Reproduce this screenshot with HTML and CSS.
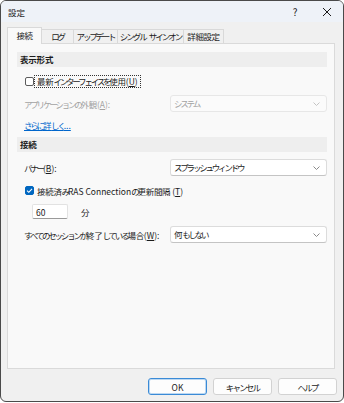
FILE: index.html
```html
<!DOCTYPE html>
<html lang="ja">
<head>
    <meta charset="UTF-8">
    <title>設定</title>
    <link rel="stylesheet" href="styles.css">
</head>
<body>
    <div class="window">
        <div class="titlebar">
            <span class="title">設定</span>
            <span class="tb-btn">?</span>
            <span class="tb-btn">
                <svg width="10" height="10" viewBox="0 0 10 10"><path d="M1 1L9 9M9 1L1 9" stroke="#1b1b1b" stroke-width="1"/></svg>
            </span>
        </div>
        <div class="content">
            <div class="tabs">
                <div class="tab active">接続</div>
                <div class="tab">ログ</div>
                <div class="tab">アップデート</div>
                <div class="tab">シングル サインオン</div>
                <div class="tab">詳細設定</div>
            </div>
            <div class="panel">
                <div class="section-head">表示形式</div>
                <div class="row check-row">
                    <span class="checkbox"></span>
                    <span class="focus"><span class="kanji">最新</span>インターフェイスを<span class="kanji">使用</span><span class="key">(<u>U</u>)</span></span>
                </div>
                <div class="row field-row disabled">
                    <span class="label">アプリケーションの<span class="kanji">外観</span><span class="key">(<u>A</u>):</span></span>
                    <div class="select">システム
                        <svg class="chev" width="7" height="4" viewBox="0 0 7 4"><path d="M0.5 0.5L3.5 3.5L6.5 0.5" fill="none" stroke="#c4c4c4"/></svg>
                    </div>
                </div>
                <div class="row link-row"><a href="#" class="link">さらに<span class="kanji">詳</span>しく<span class="key">...</span></a></div>

                <div class="section-head second">接続</div>
                <div class="row field-row">
                    <span class="label">バナー<span class="key">(<u>B</u>):</span></span>
                    <div class="select">スプラッシュウィンドウ
                        <svg class="chev" width="7" height="4" viewBox="0 0 7 4"><path d="M0.5 0.5L3.5 3.5L6.5 0.5" fill="none" stroke="#8a8a8a"/></svg>
                    </div>
                </div>
                <div class="row check-row">
                    <span class="checkbox checked">
                        <svg width="9" height="9" viewBox="0 0 9 9"><path d="M2 4.6L3.8 6.3L7 2.8" fill="none" stroke="#fff" stroke-width="1.1"/></svg>
                    </span>
                    <span class="check-label"><span class="kanji">接続済</span>み<span class="key">RAS Connection</span>の<span class="kanji">更新間隔</span><span class="key"> (<u>T</u>)</span></span>
                </div>
                <div class="row minutes-row">
                    <div class="number">60</div>
                    <span class="unit">分</span>
                </div>
                <div class="row field-row">
                    <span class="label">すべてのセッションが<span class="kanji">終了</span>している<span class="kanji">場合</span><span class="key">(<u>W</u>):</span></span>
                    <div class="select"><span class="kanji">何</span>もしない
                        <svg class="chev" width="7" height="4" viewBox="0 0 7 4"><path d="M0.5 0.5L3.5 3.5L6.5 0.5" fill="none" stroke="#8a8a8a"/></svg>
                    </div>
                </div>
            </div>
            <div class="buttons">
                <button class="default">OK</button>
                <button>キャンセル</button>
                <button>ヘルプ</button>
            </div>
        </div>
    </div>
</body>
</html>
```
FILE: styles.css
```css
body {
    margin: 0;
    background: #ffffff;
    font-family: "Noto Sans CJK JP", "Noto Sans", sans-serif;
    font-size: 8.5px;
    letter-spacing: -2.2px;
    color: #1b1b1b;
}
.kanji {
    letter-spacing: -0.3px;
}
.key {
    letter-spacing: 0;
}
.window {
    box-sizing: border-box;
    width: 344px;
    height: 402px;
    border: 1px solid #4a4a4a;
    border-radius: 6px;
    background: #f0f0f0;
    display: flex;
    flex-direction: column;
    overflow: hidden;
}
.titlebar {
    height: 21px;
    background: #eef2f8;
    display: flex;
    align-items: center;
    padding-left: 7px;
}
.title {
    flex: 1;
    letter-spacing: 0;
}
.tb-btn {
    width: 32px;
    display: flex;
    justify-content: center;
    align-items: center;
    font-size: 10px;
    letter-spacing: 0;
}
.content {
    flex: 1;
    padding: 5px 6px 0 6px;
    display: flex;
    flex-direction: column;
}
.tabs {
    display: flex;
    align-items: flex-end;
    height: 16px;
    position: relative;
    z-index: 1;
}
.tab {
    box-sizing: border-box;
    height: 14px;
    line-height: 13px;
    border: 1px solid #d9d9d9;
    border-bottom: none;
    margin-right: -1px;
    background: #f0f0f0;
    white-space: nowrap;
    text-align: center;
    word-spacing: 3px;
}
.tab:nth-child(1) { width: 35px; letter-spacing: -0.4px; }
.tab:nth-child(2) { width: 33px; }
.tab:nth-child(3) { width: 45px; }
.tab:nth-child(4) { width: 67px; letter-spacing: -2px; }
.tab:nth-child(5) { width: 41px; letter-spacing: -0.4px; }
.tab.active {
    height: 17px;
    line-height: 15px;
    margin-bottom: -1px;
    background: #f9f9f9;
}
.panel {
    box-sizing: border-box;
    height: 326px;
    margin-right: 2px;
    border: 1px solid #dadada;
    background: #f9f9f9;
    padding: 8px 7px 0 9px;
}
.section-head {
    height: 15px;
    line-height: 15px;
    padding-left: 3px;
    background: #eeeeee;
    font-weight: bold;
    letter-spacing: -0.2px;
}
.section-head.second {
    margin-top: 6px;
}
.row {
    display: flex;
    align-items: center;
    white-space: nowrap;
}
.check-row {
    height: 13px;
    margin-top: 8px;
    padding-left: 8px;
}
.checkbox {
    box-sizing: border-box;
    width: 9px;
    height: 9px;
    border: 1px solid #5c5c5c;
    border-radius: 2px;
    background: #ffffff;
    display: flex;
}
.checkbox.checked {
    border-color: #0067c0;
    background: #0067c0;
}
.checkbox.checked svg {
    margin: -1px;
}
.focus {
    padding: 0 2px;
    border: 1px dotted #333;
    line-height: 11px;
}
.check-label {
    margin-left: 3px;
}
.field-row {
    height: 17px;
    margin-top: 7px;
}
.label {
    flex: 1;
    padding-left: 7px;
}
.disabled .label {
    color: #a3a3a3;
}
.select {
    box-sizing: border-box;
    width: 157px;
    height: 17px;
    line-height: 15px;
    padding-left: 3px;
    border: 1px solid #dcdcdc;
    border-bottom-color: #c4c4c4;
    border-radius: 3px;
    background: #ffffff;
    display: flex;
    align-items: center;
}
.disabled .select {
    background: #fbfbfb;
    border-color: #e7e7e7;
    color: #a3a3a3;
}
.chev {
    margin-left: auto;
    margin-right: 6px;
}
.link-row {
    height: 13px;
    margin-top: 6px;
    padding-left: 7px;
}
.link {
    color: #0066cc;
}
.minutes-row {
    height: 15px;
    margin-top: 7px;
    padding-left: 15px;
}
.number {
    box-sizing: border-box;
    width: 36px;
    height: 15px;
    line-height: 14px;
    padding-left: 3px;
    letter-spacing: 0;
    border: 1px solid #e2e2e2;
    border-bottom-color: #9a9a9a;
    border-radius: 2px;
    background: #ffffff;
}
.unit {
    margin-left: 13px;
}
.buttons {
    display: flex;
    justify-content: flex-end;
    gap: 6px;
    margin-top: 9px;
}
.buttons button {
    box-sizing: border-box;
    width: 59px;
    height: 17px;
    padding: 0;
    font-family: inherit;
    font-size: 8.5px;
    letter-spacing: -1.8px;
    color: #1b1b1b;
    background: #fdfdfd;
    border: 1px solid #d2d2d2;
    border-radius: 3px;
}
.buttons button.default {
    letter-spacing: 0;
    border-color: #3a8ad6;
    box-shadow: inset 0 0 0 1px #bcd8f2;
}
```
